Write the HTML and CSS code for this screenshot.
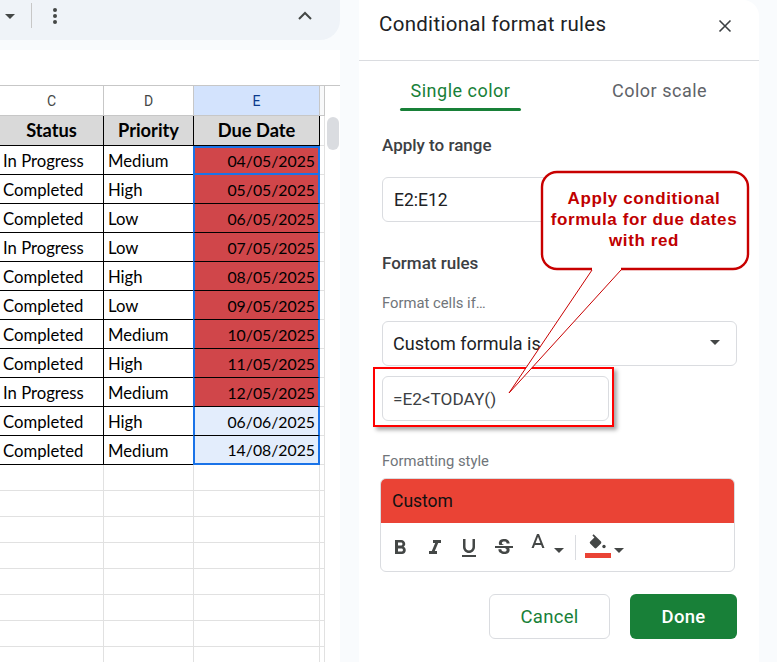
FILE: index.html
```html
<!DOCTYPE html>
<html lang="en">
<head>
<meta charset="utf-8">
<title>Conditional format rules</title>
<link rel="stylesheet" href="styles.css">
</head>
<body>
<div class="page">
  <main class="left">
    <div class="toolbar">
      <span class="caret caret-dark"></span>
      <span class="tool-sep"></span>
      <svg class="dots" width="6" height="18" viewBox="0 0 6 18"><circle cx="3" cy="3" r="2"/><circle cx="3" cy="9" r="2"/><circle cx="3" cy="15" r="2"/></svg>
      <svg class="chevron" width="16" height="10" viewBox="0 0 16 10"><path d="M2 8l6-6 6 6" fill="none" stroke="#444746" stroke-width="2"/></svg>
    </div>
    <div class="sheet">
      <div class="sheet-top"></div>
      <div class="sheet-body">
        <div class="grid">
          <div class="row row-letters"><div class="c">C</div><div class="d">D</div><div class="e letter-on">E</div><div class="g"></div></div>
          <div class="row row-title"><div class="c">Status</div><div class="d">Priority</div><div class="e">Due Date</div><div class="g"></div></div>
          <div class="row row-data"><div class="c">In Progress</div><div class="d">Medium</div><div class="e past active">04/05/2025</div><div class="g"></div></div>
          <div class="row row-data"><div class="c">Completed</div><div class="d">High</div><div class="e past">05/05/2025</div><div class="g"></div></div>
          <div class="row row-data"><div class="c">Completed</div><div class="d">Low</div><div class="e past">06/05/2025</div><div class="g"></div></div>
          <div class="row row-data"><div class="c">In Progress</div><div class="d">Low</div><div class="e past">07/05/2025</div><div class="g"></div></div>
          <div class="row row-data"><div class="c">Completed</div><div class="d">High</div><div class="e past">08/05/2025</div><div class="g"></div></div>
          <div class="row row-data"><div class="c">Completed</div><div class="d">Low</div><div class="e past">09/05/2025</div><div class="g"></div></div>
          <div class="row row-data"><div class="c">Completed</div><div class="d">Medium</div><div class="e past">10/05/2025</div><div class="g"></div></div>
          <div class="row row-data"><div class="c">Completed</div><div class="d">High</div><div class="e past">11/05/2025</div><div class="g"></div></div>
          <div class="row row-data"><div class="c">In Progress</div><div class="d">Medium</div><div class="e past">12/05/2025</div><div class="g"></div></div>
          <div class="row row-data"><div class="c">Completed</div><div class="d">High</div><div class="e future">06/06/2025</div><div class="g"></div></div>
          <div class="row row-data row-last"><div class="c">Completed</div><div class="d">Medium</div><div class="e future">14/08/2025</div><div class="g"></div></div>
          <div class="row row-blank"><div class="c"></div><div class="d"></div><div class="e"></div><div class="g"></div></div>
          <div class="row row-blank"><div class="c"></div><div class="d"></div><div class="e"></div><div class="g"></div></div>
          <div class="row row-blank"><div class="c"></div><div class="d"></div><div class="e"></div><div class="g"></div></div>
          <div class="row row-blank"><div class="c"></div><div class="d"></div><div class="e"></div><div class="g"></div></div>
          <div class="row row-blank"><div class="c"></div><div class="d"></div><div class="e"></div><div class="g"></div></div>
          <div class="row row-blank"><div class="c"></div><div class="d"></div><div class="e"></div><div class="g"></div></div>
          <div class="row row-blank"><div class="c"></div><div class="d"></div><div class="e"></div><div class="g"></div></div>
          <div class="row row-blank"><div class="c"></div><div class="d"></div><div class="e"></div><div class="g"></div></div>
        </div>
        <div class="scroll-track"><div class="scroll-thumb"></div></div>
      </div>
    </div>
  </main>

  <aside class="panel">
    <header class="panel-head">
      <h1>Conditional format rules</h1>
      <svg class="close" width="14" height="14" viewBox="0 0 14 14"><path d="M1.5 1.5l11 11M12.5 1.5l-11 11" stroke="#3c4043" stroke-width="1.6" fill="none"/></svg>
    </header>
    <div class="tabs">
      <div class="tab tab-on">Single color</div>
      <div class="tab">Color scale</div>
    </div>
    <div class="panel-body">
      <h2 class="h-range">Apply to range</h2>
      <div class="field field-wide">E2:E12</div>
      <h2 class="h-rules">Format rules</h2>
      <div class="label label-if">Format cells if…</div>
      <div class="field field-select">Custom formula is<span class="caret caret-sel"></span></div>
      <div class="field field-formula">=E2&lt;TODAY()</div>
      <div class="label label-style">Formatting style</div>
      <div class="style-box">
        <div class="style-preview">Custom</div>
        <div class="style-tools">
          <svg class="ic ic-b" width="24" height="24" viewBox="0 0 24 24"><path d="M15.6 10.79c.97-.67 1.65-1.77 1.65-2.79 0-2.26-1.75-4-4-4H7v14h7.04c2.09 0 3.71-1.7 3.71-3.79 0-1.52-.86-2.82-2.15-3.42zM10 6.5h3c.83 0 1.5.67 1.5 1.5s-.67 1.5-1.5 1.5h-3v-3zm3.5 9H10v-3h3.5c.83 0 1.5.67 1.5 1.5s-.67 1.5-1.5 1.5z"/></svg>
          <svg class="ic" width="24" height="24" viewBox="0 0 24 24"><path d="M10 4v3h2.21l-3.42 8H6v3h8v-3h-2.21l3.42-8H18V4z"/></svg>
          <svg class="ic" width="24" height="24" viewBox="0 0 24 24"><path d="M12 17c3.31 0 6-2.69 6-6V3h-2.5v8c0 1.93-1.57 3.5-3.5 3.5S8.5 12.93 8.5 11V3H6v8c0 3.31 2.69 6 6 6zm-7 2v2h14v-2H5z"/></svg>
          <svg class="ic" width="24" height="24" viewBox="0 0 24 24"><path d="M7.24 8.75c-.26-.48-.39-1.03-.39-1.67 0-.61.13-1.16.4-1.67.26-.5.63-.93 1.11-1.29.48-.35 1.05-.63 1.7-.83.66-.19 1.39-.29 2.18-.29.81 0 1.54.11 2.21.34.66.22 1.23.54 1.69.94.47.4.83.88 1.08 1.43.25.55.38 1.15.38 1.81h-3.01c0-.31-.05-.59-.15-.85-.09-.27-.24-.49-.44-.68-.2-.19-.45-.33-.75-.44-.3-.1-.66-.16-1.06-.16-.39 0-.74.04-1.03.13-.29.09-.53.21-.72.36-.19.16-.34.34-.44.55-.1.21-.15.43-.15.66 0 .48.25.88.74 1.21.38.25.77.48 1.41.7H7.39c-.05-.08-.11-.17-.15-.25zM21 12v-2H3v2h9.62c.18.07.4.14.55.2.37.17.66.34.87.51.21.17.35.36.43.57.07.2.11.43.11.69 0 .23-.05.45-.14.66-.09.2-.23.38-.42.53-.19.15-.42.26-.71.35-.29.08-.63.13-1.01.13-.43 0-.83-.04-1.18-.13s-.66-.23-.91-.42c-.25-.19-.45-.44-.59-.75-.14-.31-.25-.76-.25-1.21H6.4c0 .55.08 1.13.24 1.58.16.45.37.85.65 1.21.28.35.6.66.98.92.37.26.78.48 1.22.65.44.17.9.3 1.38.39.48.08.96.13 1.44.13.8 0 1.53-.09 2.18-.28s1.21-.45 1.67-.79c.46-.34.82-.77 1.07-1.27s.38-1.07.38-1.71c0-.6-.1-1.14-.31-1.61-.05-.11-.11-.23-.17-.33H21z"/></svg>
          <svg class="ic ic-a" width="24" height="24" viewBox="0 0 24 24"><path d="M11 3L5.5 17h2.25l1.12-3h6.25l1.12 3h2.25L13 3h-2zm-1.38 9L12 5.67 14.38 12H9.62z"/></svg>
          <span class="caret caret-small"></span>
          <span class="style-sep"></span>
          <div class="fill-wrap">
            <svg class="ic-fill" width="22" height="20" viewBox="0 0 22 20"><path d="M14 8.6L6.6 1.2 5.4 2.4l2 2-4.3 4.4c-.5.5-.5 1.2 0 1.7l4.5 4.6c.5.5 1.3.5 1.8 0l4.6-4.6c.4-.5.4-1.4 0-1.9z"/><circle cx="17" cy="13.5" r="1.7"/></svg>
            <span class="fill-bar"></span>
          </div>
          <span class="caret caret-small caret-fill"></span>
        </div>
      </div>
      <div class="actions">
        <button class="btn btn-cancel" type="button">Cancel</button>
        <button class="btn btn-done" type="button">Done</button>
      </div>
    </div>
  </aside>
</div>

<div class="marker"></div>
<svg class="callout-shape" width="777" height="662" viewBox="0 0 777 662">
  <path d="M557 172H733a15 15 0 0 1 15 15V254a15 15 0 0 1-15 15H621L509 393 592 269H557a15 15 0 0 1-15-15V187a15 15 0 0 1 15-15Z" fill="#fff"/>
  <path d="M592 269H557a15 15 0 0 1-15-15V187a15 15 0 0 1 15-15H733a15 15 0 0 1 15 15V254a15 15 0 0 1-15 15H621" fill="none" stroke="#c80000" stroke-width="2.4"/>
  <path d="M592 270L509 393 621 270" fill="none" stroke="#c80000" stroke-width="1"/>
</svg>
<div class="callout-text">Apply conditional<br>formula for due dates<br>with red</div>
</body>
</html>
```
FILE: styles.css
```css
* { box-sizing: border-box; }
html, body { margin: 0; height: 100%; }
body {
  position: relative;
  width: 777px;
  height: 662px;
  overflow: hidden;
  background: #f9fbfd;
  font-family: Roboto, "Liberation Sans", sans-serif;
}
.page { display: flex; height: 662px; }

.left { width: 340px; flex: none; display: flex; flex-direction: column; gap: 10px; }
.toolbar {
  height: 40px;
  background: #eff3f8;
  border-bottom-right-radius: 20px;
  display: flex;
  align-items: center;
  padding-left: 5px;
  flex: none;
}
.caret { display: inline-block; width: 0; height: 0; border-style: solid; border-color: #444746 transparent transparent; }
.caret-dark { border-width: 5px 5px 0; margin-top: -8px; }
.tool-sep { width: 1px; height: 25px; background: #c7c7c7; margin: -10px 0 0 16px; }
.dots { fill: #444746; margin: -9px 0 0 20px; }
.chevron { margin: -9px 0 0 239px; }

.sheet { flex: 1; background: #fff; display: flex; flex-direction: column; min-height: 0; }
.sheet-top { height: 36px; flex: none; border-bottom: 1px solid #c7c7c7; }
.sheet-body { flex: 1; display: flex; min-height: 0; overflow: hidden; }
.grid { width: 325px; flex: none; }
.row { display: grid; grid-template-columns: 104px 90px 126px 5px; font-family: Lato, "Open Sans", sans-serif; color: #000; }
.row > div { border-right: 1px solid #e1e1e1; border-bottom: 1px solid #e1e1e1; }
.row-letters { height: 30px; font-family: Roboto, sans-serif; font-size: 14px; color: #444746; }
.row-letters > div { display: flex; align-items: center; justify-content: center; background: #fff; border-right-color: #c7c7c7; border-bottom-color: #c7c7c7; }
.row-letters .g { background: #f8f9fa; }
.row-letters .letter-on { background: #d3e3fd; color: #0b3a8c; }
.row-title { height: 30px; font-size: 18.3px; font-weight: 700; }
.row-title > div { background: #d9d9d9; border-right-color: #000; border-bottom-color: #000; display: flex; align-items: center; justify-content: center; padding-bottom: 1px; }
.row-title .g { background: #fff; border-right-color: #e1e1e1; border-bottom-color: #e1e1e1; }
.row-data { height: 29px; font-size: 16.7px; }
.row-data > div { border-right-color: #000; border-bottom-color: #000; display: flex; align-items: center; padding-left: 3px; }
.row-data .c { padding: 1px 0 0 3px; }
.row-data .d { padding: 1px 0 0 4px; }
.row-data .e { justify-content: flex-end; padding: 0 3px 0 0; border-left: 2px solid #1a73e8; border-right: 2px solid #1a73e8; margin-left: -1px; font-size: 15.8px; }
.row-data .g { border-right-color: #e1e1e1; border-bottom-color: #e1e1e1; }
.past { background: #d0464a; }
.future { background: #e3edfc; }
.row-data .active { border: 2px solid #1a73e8; }
.row-last .e { border-bottom: 2px solid #1a73e8; }
.row-blank { height: 26px; }
.scroll-track { flex: 1; padding: 31px 1px 0 2px; background: #fff; }
.scroll-thumb { width: 12px; height: 33px; background: #dadce0; border-radius: 6px; }

.panel {
  width: 400px;
  margin-left: 19px;
  flex: none;
  background: #fff;
  border-top-right-radius: 16px;
  color: #202124;
}
.panel-head {
  height: 61px;
  border-bottom: 1px solid #dadce0;
  display: flex;
  justify-content: space-between;
  padding: 12px 27px 0 20px;
}
.panel-head h1 { margin: 0; font-size: 20.5px; font-weight: 400; letter-spacing: .3px; line-height: 24px; color: #202124; }
.close { margin-top: 7px; }
.tabs { display: flex; height: 50px; padding: 0 0 0 41px; gap: 91px; }
.tab { font-size: 18px; letter-spacing: .5px; line-height: 22px; padding-top: 19px; color: #5f6368; width: 121px; text-align: center; }
.tab-on { color: #188038; position: relative; }
.tab-on::after { content: ""; display: block; height: 3px; background: #188038; border-radius: 2px; margin-top: 6px; }
.tab + .tab { text-align: left; width: auto; }
.panel-body { padding: 0 22px 0 23px; }
h2 { margin: 0; font-size: 17px; font-weight: 500; color: #3c4043; line-height: 20px; }
.h-range { padding-top: 24px; }
.field {
  border: 1px solid #dadce0;
  border-radius: 6px;
  height: 45px;
  font-size: 17.5px;
  display: flex;
  align-items: center;
  padding-left: 10px;
  background: #fff;
  color: #202124;
}
.field-wide { margin-top: 22px; padding-left: 11px; }
.h-rules { margin-top: 31px; }
.label { font-size: 14.8px; color: #70757a; line-height: 18px; }
.label-if { margin-top: 21px; }
.field-select { margin-top: 9px; position: relative; font-size: 18px; }
.caret-sel { position: absolute; right: 16px; top: 18px; border-width: 5px 5px 0; }
.field-formula { margin-top: 10px; width: 227px; font-size: 17.2px; color: #3c4043; }
.label-style { margin-top: 31px; }
.style-box { margin: 8px 2px 0 -2px; border: 1px solid #dadce0; border-radius: 6px; height: 94px; overflow: hidden; }
.style-preview {
  height: 44px;
  background: #ea4335;
  font-size: 17.5px;
  display: flex;
  align-items: center;
  padding-left: 11px;
  color: #111;
}
.style-tools { display: flex; align-items: center; height: 49px; padding-left: 7px; }
.ic { fill: #444746; margin-right: 10.5px; flex: none; }
.ic-a { margin: -9px 0 0 0; }
.caret-small { border-width: 5px 5px 0; margin: 5px 0 0 4px; }
.style-sep { width: 1px; height: 25px; background: #dadce0; margin: 0 9px 0 11px; }
.fill-wrap { display: flex; flex-direction: column; align-items: center; width: 26px; margin-top: -4px; }
.ic-fill { fill: #444746; }
.fill-bar { width: 26px; height: 5px; background: #ea4335; }
.caret-fill { margin-left: 3px; }
.actions { display: flex; justify-content: flex-end; gap: 20px; margin-top: 22px; }
.btn { height: 45px; border-radius: 6px; font-family: Roboto, sans-serif; font-size: 18.5px; letter-spacing: .3px; }
.btn-cancel { width: 121px; background: #fff; border: 1px solid #dadce0; color: #188038; }
.btn-done { width: 107px; background: #188038; border: 0; color: #fff; font-weight: 500; }

.marker {
  position: absolute;
  left: 373px;
  top: 367px;
  width: 241px;
  height: 60px;
  border: 2px solid #f00;
  box-shadow: 3px 3px 4px rgba(0,0,0,.35);
}
.callout-shape { position: absolute; left: 0; top: 0; pointer-events: none; }
.callout-text {
  position: absolute;
  left: 542px;
  top: 188px;
  width: 204px;
  text-align: center;
  font-family: "Liberation Sans", Arial, sans-serif;
  font-weight: 700;
  font-size: 17px;
  letter-spacing: .6px;
  line-height: 21px;
  color: #c00000;
}
```
